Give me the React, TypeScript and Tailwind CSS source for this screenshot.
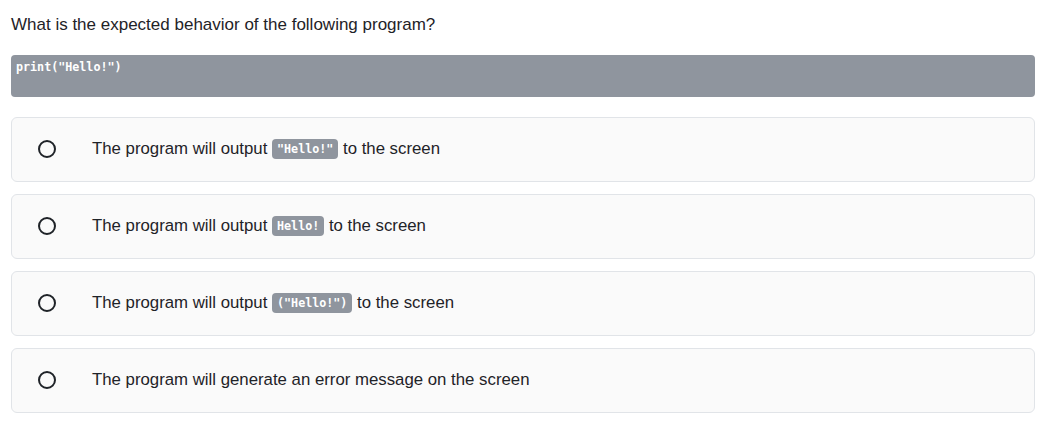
const options = [
  { id: 'a', before: 'The program will output ', code: '"Hello!"', after: ' to the screen' },
  { id: 'b', before: 'The program will output ', code: 'Hello!', after: ' to the screen' },
  { id: 'c', before: 'The program will output ', code: '("Hello!")', after: ' to the screen' },
  { id: 'd', before: 'The program will generate an error message on the screen', code: '', after: '' },
];

export default function App() {
  return (
    <div className="bg-white px-[11px] pt-[13px] pb-6 text-[#1f2328] font-['Liberation_Sans',Arial,sans-serif] w-[1046px]">
      <h2 className="text-[17px] leading-[24px] mb-[18px]">What is the expected behavior of the following program?</h2>

      <pre className="bg-[#8f959e] rounded-[4px] h-[42px] px-[5px] pt-[4px] text-white font-bold text-[11.7px] leading-[16px] font-['DejaVu_Sans_Mono',monospace]">
        print("Hello!")
      </pre>

      <div className="mt-[20px] flex flex-col gap-[12px]">
        {options.map((opt) => (
          <label
            key={opt.id}
            className="flex items-center h-[65px] border border-[#e1e4e8] bg-[#fafafa] rounded-[6px] cursor-pointer"
          >
            <span className="ml-[26px] mb-[2px] w-[18px] h-[18px] rounded-full border-2 border-[#1f2328] shrink-0" />
            <span className="ml-[36px] mb-[2px] text-[16.8px] leading-[24px] whitespace-pre">
              {opt.before}
              {opt.code && (
                <code className="bg-[#8f959e] text-white font-bold text-[11.7px] rounded-[4px] px-[5px] py-[3px] align-[1px] font-['DejaVu_Sans_Mono',monospace]">
                  {opt.code}
                </code>
              )}
              {opt.after}
            </span>
          </label>
        ))}
      </div>
    </div>
  );
}
